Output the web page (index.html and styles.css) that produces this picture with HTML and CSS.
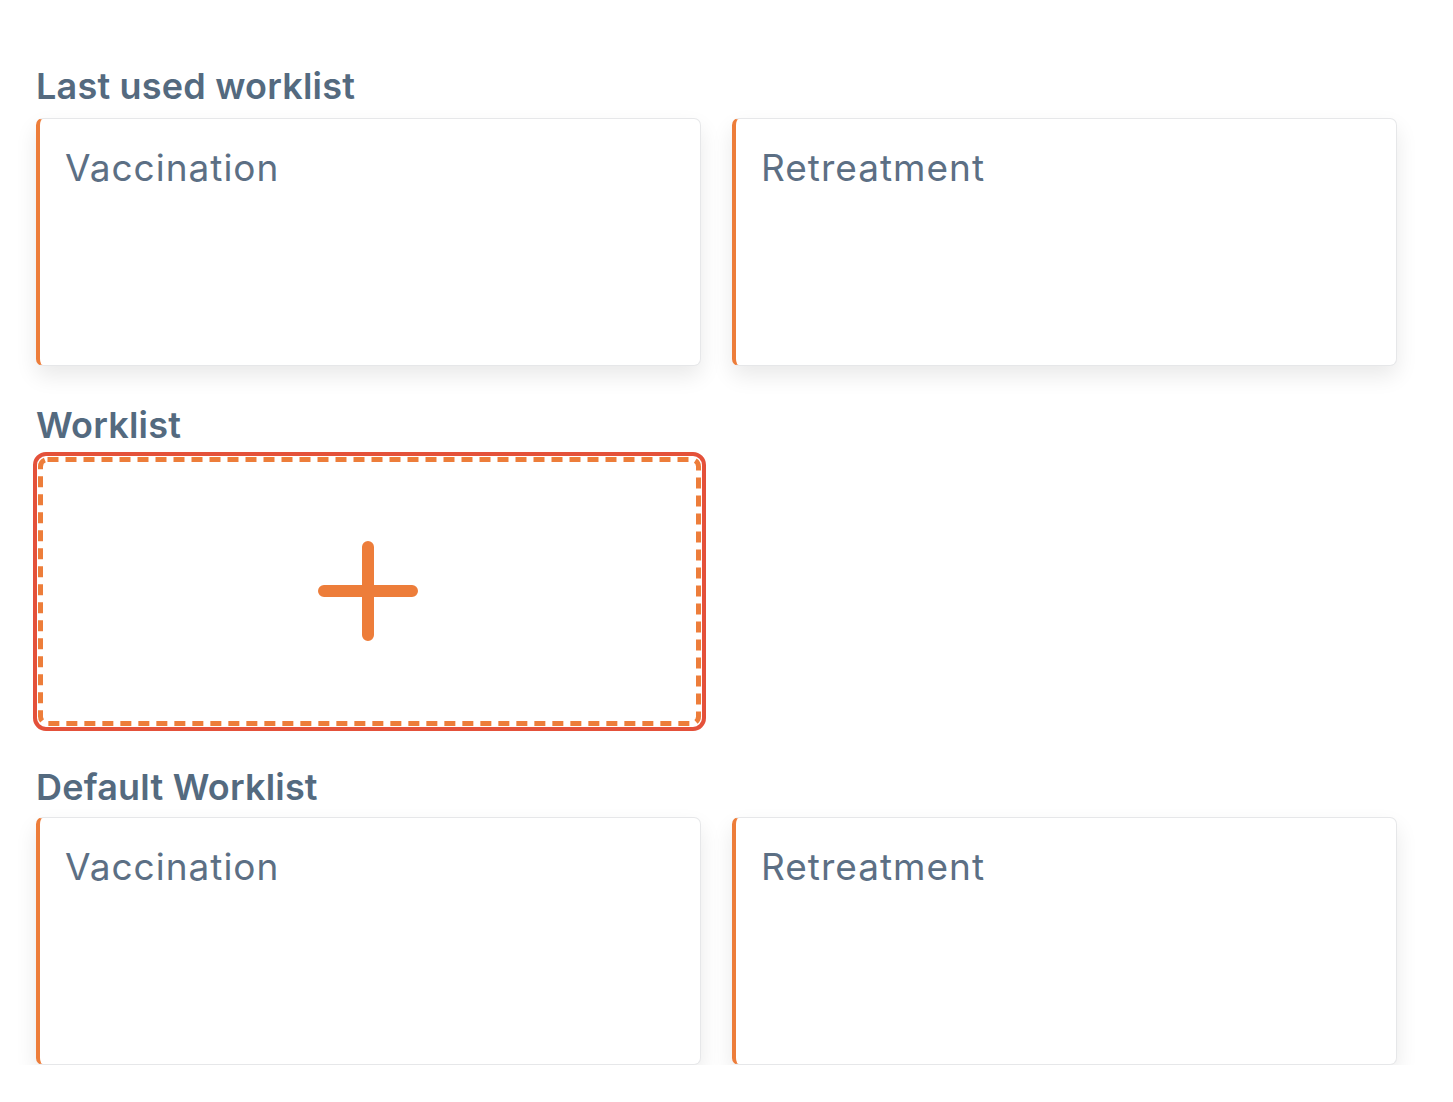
FILE: index.html
```html
<!DOCTYPE html>
<html lang="en">
<head>
<meta charset="utf-8">
<title>Worklists</title>
<link rel="stylesheet" href="styles.css">
</head>
<body>
<main class="page">
  <section class="group">
    <h2 class="group-title">Last used worklist</h2>
    <div class="card-grid">
      <div class="card"><span class="card-name">Vaccination</span></div>
      <div class="card"><span class="card-name">Retreatment</span></div>
    </div>
  </section>

  <section class="group group-worklist">
    <h2 class="group-title">Worklist</h2>
    <div class="card-grid">
      <button class="add-tile" type="button" aria-label="Add worklist">
        <svg class="dash-frame" aria-hidden="true"><rect class="dash-rect" rx="7" ry="7"/></svg>
        <svg class="add-icon" width="100" height="100" viewBox="0 0 100 100" aria-hidden="true">
          <path d="M50 6 V94 M6 50 H94" fill="none" stroke="#ed7d3a" stroke-width="12" stroke-linecap="round"/>
        </svg>
      </button>
    </div>
  </section>

  <section class="group group-default">
    <h2 class="group-title">Default Worklist</h2>
    <div class="card-grid">
      <div class="card"><span class="card-name">Vaccination</span></div>
      <div class="card"><span class="card-name">Retreatment</span></div>
    </div>
  </section>
</main>
</body>
</html>
```

FILE: styles.css
```css
html, body {
  margin: 0;
  padding: 0;
  background: #ffffff;
}

body {
  font-family: "Inter", "Open Sans", "Liberation Sans", sans-serif;
}

.page {
  padding: 64px 56px 0 36px;
}

.group-title {
  margin: 0 0 10px 0;
  font-size: 36px;
  line-height: 44px;
  font-weight: 600;
  color: #546a7f;
  letter-spacing: 0.2px;
}

.card-grid {
  display: grid;
  grid-template-columns: 1fr 1fr;
  column-gap: 31px;
}

.card {
  box-sizing: border-box;
  height: 248px;
  background: #ffffff;
  border: 1px solid #e6e7e9;
  border-left: 4px solid #ed7d3a;
  border-radius: 7px;
  box-shadow: 0 10px 22px rgba(0, 0, 0, 0.09);
  padding: 27px 0 0 25px;
}

.card-name {
  font-size: 37px;
  line-height: 44px;
  font-weight: 400;
  color: #5c6f84;
  letter-spacing: 1px;
}

.group-worklist {
  margin-top: 37px;
}

.add-tile {
  position: relative;
  box-sizing: border-box;
  margin: 0 0 0 2px;
  height: 269px;
  background: #ffffff;
  border: none;
  border-radius: 8px;
  outline: 4px solid #e4513a;
  outline-offset: 1px;
  display: flex;
  align-items: center;
  justify-content: center;
  padding: 0;
  cursor: pointer;
}

.dash-frame {
  position: absolute;
  inset: 0;
  width: 100%;
  height: 100%;
  overflow: visible;
}

.dash-rect {
  x: 2.5px;
  y: 2.5px;
  width: calc(100% - 5px);
  height: calc(100% - 5px);
  fill: none;
  stroke: #ed7d3a;
  stroke-width: 5px;
  stroke-dasharray: 11 7;
}

.add-icon {
  position: relative;
  display: block;
  margin-left: -3px;
  margin-top: -1px;
}

.group-default {
  margin-top: 39px;
}

.group-default .group-title {
  margin-bottom: 8px;
}
```
